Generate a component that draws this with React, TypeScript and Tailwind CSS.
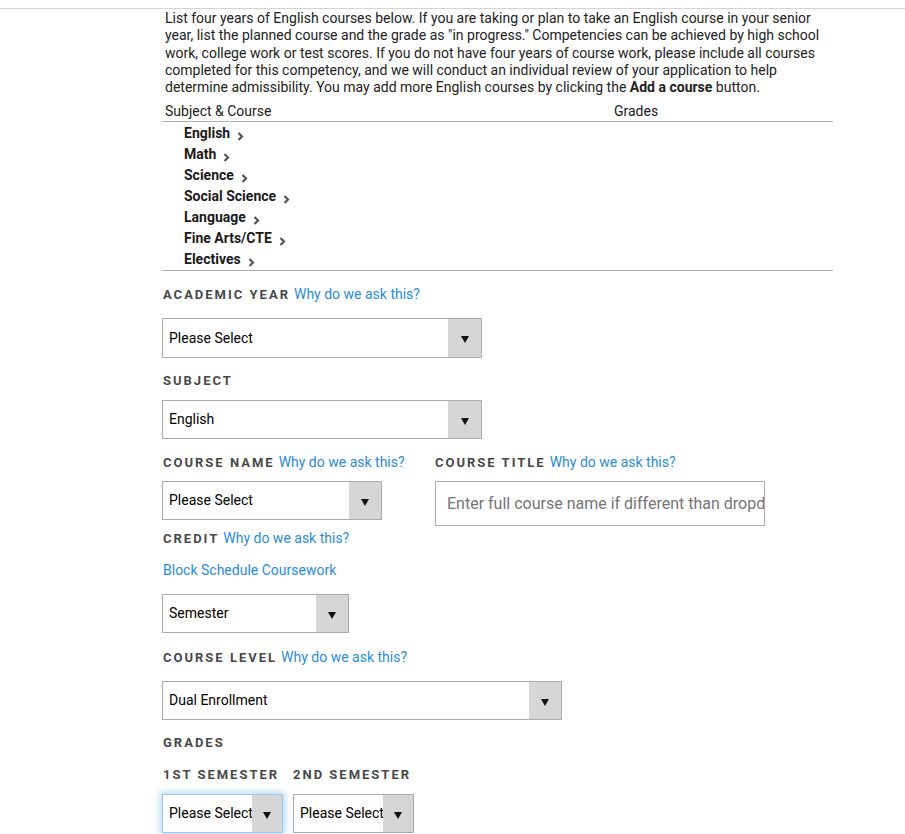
import { FC, ReactNode } from "react";

const courses = [
  "English",
  "Math",
  "Science",
  "Social Science",
  "Language",
  "Fine Arts/CTE",
  "Electives",
];

const Chevron: FC = () => (
  <svg
    width="7"
    height="9"
    viewBox="0 0 7 9"
    className="ml-[7px] mt-[5px] shrink-0"
  >
    <path
      d="M1.5 1 L5 4.5 L1.5 8"
      fill="none"
      stroke="#555"
      strokeWidth="2.2"
    />
  </svg>
);

interface LabelProps {
  text: string;
  why?: boolean;
  className?: string;
}

const Label: FC<LabelProps> = ({ text, why, className = "" }) => (
  <div className={`flex items-baseline h-5 leading-5 ${className}`}>
    <span className="text-[13px] font-bold tracking-[2px] uppercase text-[#484848]">
      {text}
    </span>
    {why && (
      <a className="ml-[4px] text-[14px] text-[#2b8cd6] cursor-pointer">
        Why do we ask this?
      </a>
    )}
  </div>
);

interface SelectProps {
  value: string;
  width: string;
  height?: string;
  arrow?: string;
  focused?: boolean;
  className?: string;
}

const Select: FC<SelectProps> = ({
  value,
  width,
  height = "h-[39px]",
  arrow = "w-[32px]",
  focused,
  className = "",
}) => (
  <div
    className={`flex border bg-white overflow-hidden ${width} ${height} ${
      focused
        ? "border-[#9cc8ea] shadow-[0_0_7px_2px_rgba(130,195,240,0.6)]"
        : "border-[#ababab]"
    } ${className}`}
  >
    <div className="flex-1 min-w-0 pl-[6px] flex items-center text-[14px] text-black whitespace-nowrap">
      {value}
    </div>
    <div
      className={`relative shrink-0 bg-[#d6d6d6] flex items-center justify-center ${arrow}`}
    >
      <svg width="8" height="7" viewBox="0 0 8 7" className="mt-[3px]">
        <path d="M0 0 H8 L4 7 Z" fill="#111" />
      </svg>
    </div>
  </div>
);

const Block: FC<{ children: ReactNode; className?: string }> = ({
  children,
  className = "",
}) => <div className={className}>{children}</div>;

export default function App() {
  return (
    <div
      className="w-[905px] h-[834px] bg-white overflow-hidden text-[#222]"
      style={{ fontFamily: "Roboto, 'Liberation Sans', sans-serif" }}
    >
      <div className="h-[8px]" />
      <div className="border-t border-[#d4d4d4]">
        <div className="ml-[162px] w-[671px]">
          <p className="pt-[1px] px-[3px] text-[14px] leading-[17.25px] text-[#222] pr-[10px]">
            List four years of English courses below. If you are taking or plan
            to take an English course in your senior year, list the planned
            course and the grade as "in progress." Competencies can be achieved
            by high school work, college work or test scores. If you do not
            have four years of course work, please include all courses
            completed for this competency, and we will conduct an individual
            review of your application to help determine admissibility. You may
            add more English courses by clicking the{" "}
            <b className="font-bold">Add a course</b> button.
          </p>

          <div className="mt-[5px] grid grid-cols-[449px_1fr] h-[21px] leading-5 text-[14px] text-[#222] border-b border-[#b3b3b3] px-[3px]">
            <span>Subject &amp; Course</span>
            <span>Grades</span>
          </div>
          <div className="pt-[1px] border-b border-[#b3b3b3]">
            {courses.map((c) => (
              <div
                key={c}
                className="h-[21px] flex items-center pl-[22px] text-[14px] font-bold text-[#1a1a1a]"
              >
                <span>{c}</span>
                <Chevron />
              </div>
            ))}
          </div>

          <Block className="pl-[1px]">
            <Label text="Academic Year" why className="mt-[13px]" />
          </Block>
          <Select
            value="Please Select"
            width="w-[320px]"
            height="h-[40px]"
            arrow="w-[33px]"
            className="mt-[14px]"
          />

          <Label text="Subject" className="mt-[13px] pl-[1px]" />
          <Select
            value="English"
            width="w-[320px]"
            arrow="w-[33px]"
            className="mt-[9px]"
          />

          <div className="mt-[13px] flex items-start">
            <div className="w-[273px]">
              <Label text="Course Name" why className="pl-[1px]" />
              <Select
                value="Please Select"
                width="w-[220px]"
                className="mt-[9px]"
              />
            </div>
            <div>
              <Label text="Course Title" why />
              <input
                placeholder="Enter full course name if different than dropdown"
                className="mt-[9px] w-[330px] h-[45px] border border-[#ababab] pl-[11px] text-[16px] text-[#222] placeholder:text-[#757575] outline-none"
                style={{ fontFamily: "Roboto, 'Liberation Sans', sans-serif" }}
              />
            </div>
          </div>

          <Label text="Credit" why className="mt-[2px] pl-[1px]" />
          <div className="mt-[12px] h-5 leading-5 text-[14px] text-[#2b8cd6] pl-[1px]">
            Block Schedule Coursework
          </div>
          <Select value="Semester" width="w-[187px]" className="mt-[14px]" />

          <Label text="Course Level" why className="mt-[14px] pl-[1px]" />
          <Select
            value="Dual Enrollment"
            width="w-[400px]"
            className="mt-[14px]"
          />

          <Label text="Grades" className="mt-[13px] pl-[1px]" />
          <div className="mt-[12px] flex gap-[10px]">
            <div className="w-[121px]">
              <Label text="1st Semester" className="pl-[1px]" />
              <Select
                value="Please Select"
                width="w-[121px]"
                arrow="w-[30px]"
                focused
                className="mt-[9px]"
              />
            </div>
            <div className="w-[121px]">
              <Label text="2nd Semester" />
              <Select
                value="Please Select"
                width="w-[121px]"
                arrow="w-[30px]"
                className="mt-[9px]"
              />
            </div>
          </div>
        </div>
      </div>
    </div>
  );
}
